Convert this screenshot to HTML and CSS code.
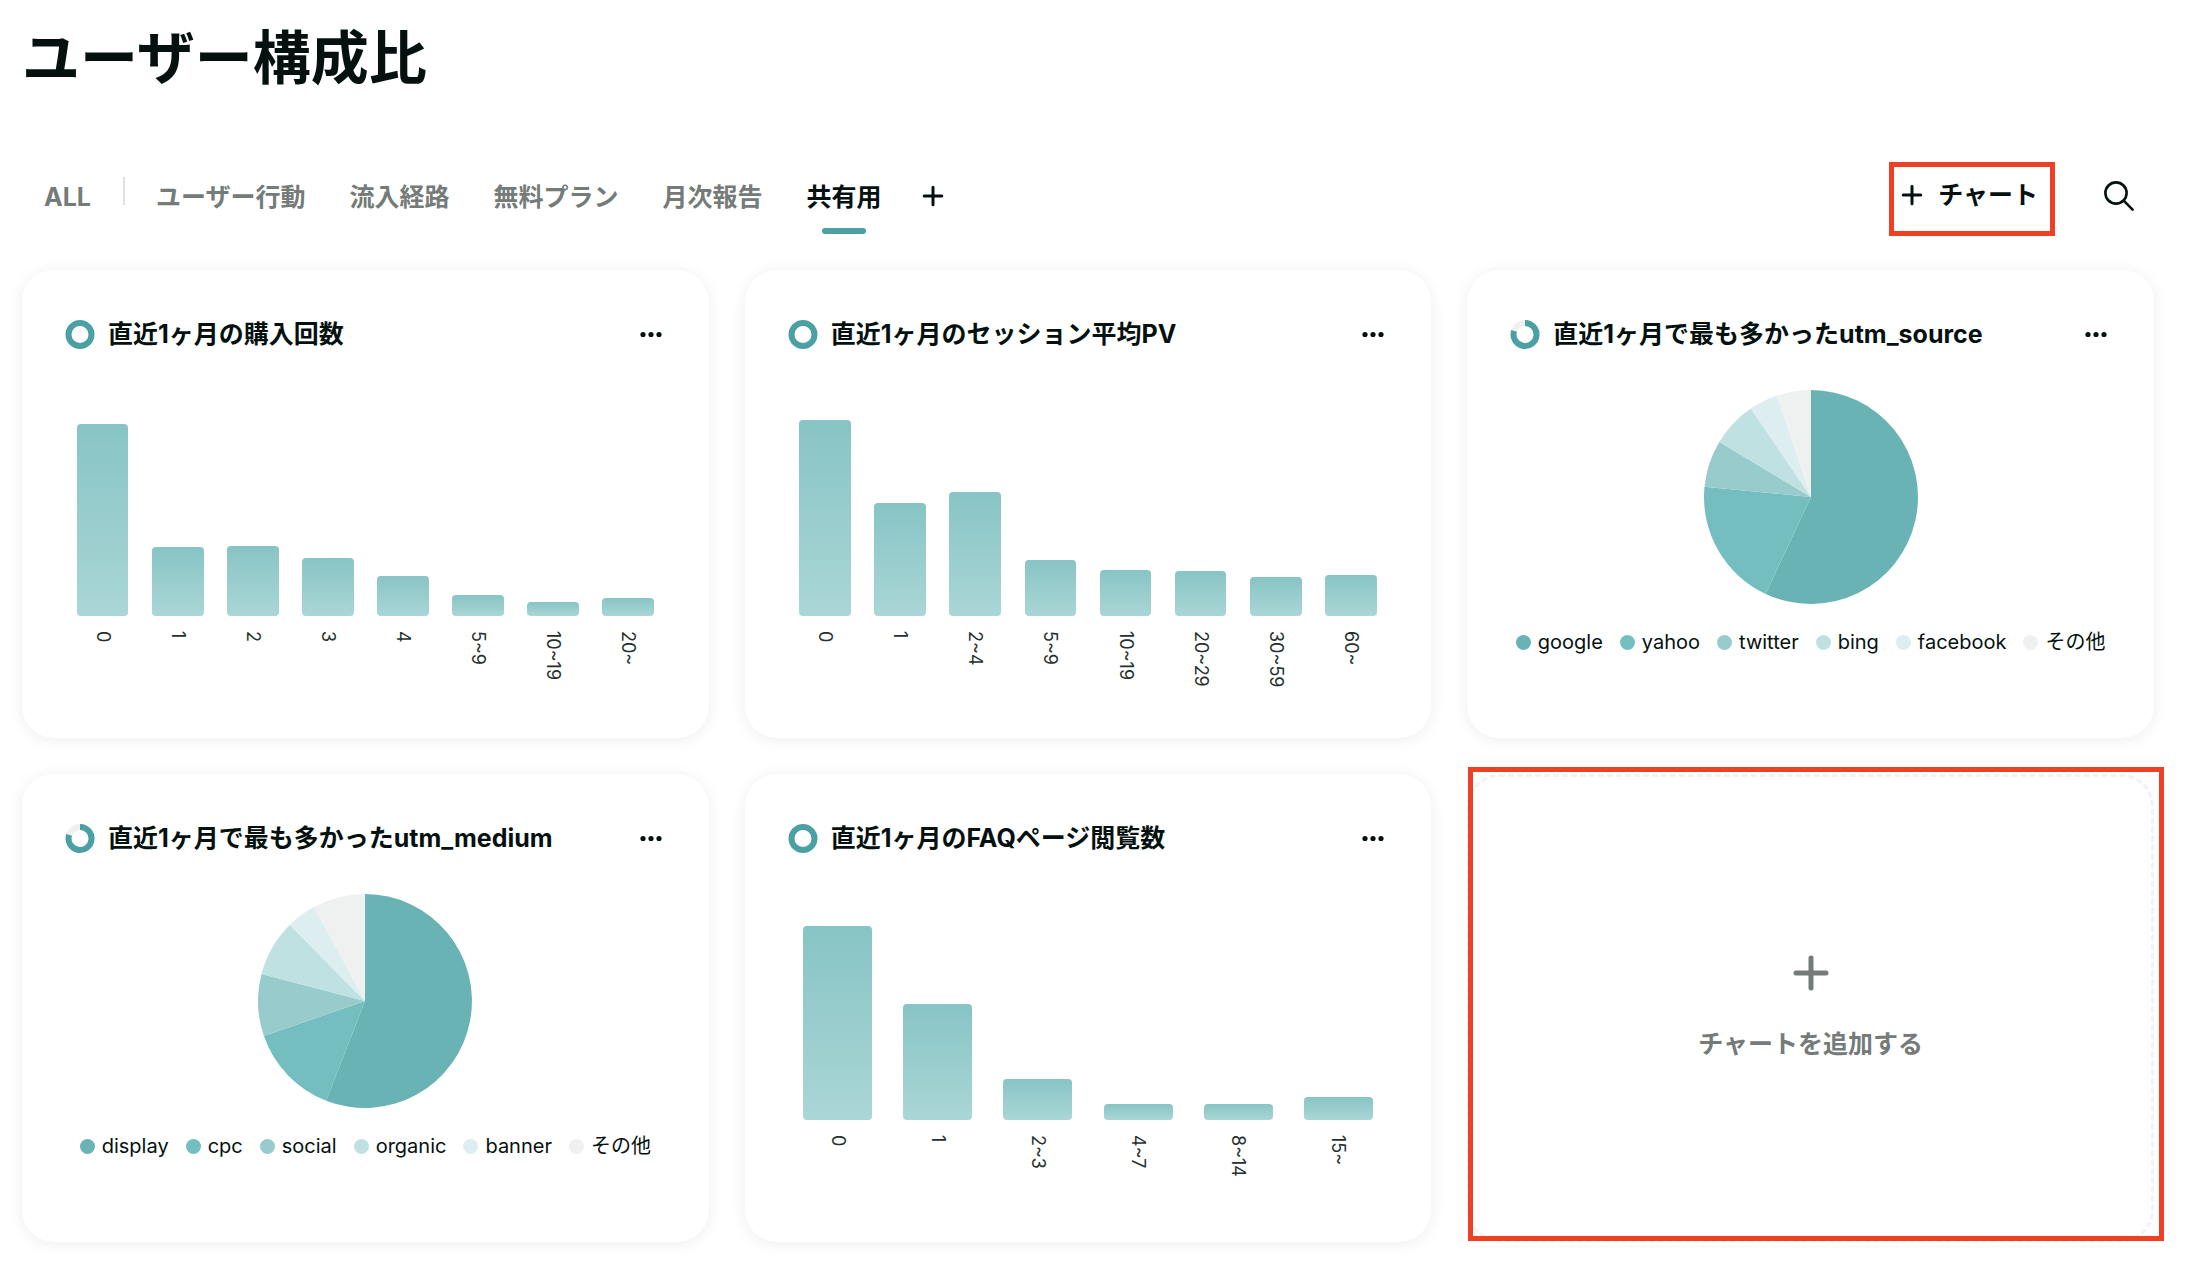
FILE: index.html
```html
<!DOCTYPE html>
<html lang="ja">
<head>
<meta charset="utf-8">
<meta name="viewport" content="width=device-width, initial-scale=1">
<title>ユーザー構成比</title>
<link rel="stylesheet" href="styles.css">
</head>
<body>
<svg class="defs" aria-hidden="true">
  <symbol id="icon-ring" viewBox="0 0 30 30">
    <circle cx="15" cy="14.5" r="11.5" fill="none" stroke="#4ba0a3" stroke-width="6"/>
  </symbol>
  <symbol id="icon-ring-part" viewBox="0 0 30 30">
    <circle cx="15" cy="14.5" r="11.5" fill="none" stroke="#eff1f0" stroke-width="6"/>
    <path d="M15 3A11.5 11.5 0 1 1 4.1 10.9" fill="none" stroke="#4ba0a3" stroke-width="6"/>
  </symbol>
  <symbol id="icon-more" viewBox="0 0 30 30">
    <circle cx="7" cy="14.5" r="2.6"/><circle cx="15" cy="14.5" r="2.6"/><circle cx="23" cy="14.5" r="2.6"/>
  </symbol>
  <symbol id="icon-plus" viewBox="0 0 22 22">
    <path d="M11 2.2V19.8M2.2 11H19.8" fill="none" stroke="currentColor" stroke-width="3" stroke-linecap="round"/>
  </symbol>
</svg>
<main class="page">
  <h1 class="page-title">ユーザー構成比</h1>
  <div class="toolbar">
    <nav class="tabs" aria-label="ボード">
      <button class="tab tab-all" type="button">ALL</button>
      <span class="divider"></span>
      <button class="tab" type="button">ユーザー行動</button>
      <button class="tab" type="button">流入経路</button>
      <button class="tab" type="button">無料プラン</button>
      <button class="tab" type="button">月次報告</button>
      <button class="tab tab-active" type="button" aria-current="page">共有用</button>
      <button class="tab-add" type="button" aria-label="タブを追加"><svg class="icon-plus"><use href="#icon-plus"/></svg></button>
    </nav>
    <div class="actions">
      <button class="add-button" type="button"><svg class="icon-plus"><use href="#icon-plus"/></svg>チャート</button>
      <button class="search" type="button" aria-label="検索">
        <svg class="icon-search" viewBox="0 0 32 32"><circle cx="13" cy="13" r="10.6"/><path d="M20.7 20.7L29.6 29.6"/></svg>
      </button>
    </div>
  </div>

  <div class="grid">
    <section class="card">
      <header class="card-head">
        <svg class="icon-ring"><use href="#icon-ring"/></svg>
        <h2 class="card-title">直近1ヶ月の購入回数</h2>
        <button class="more" type="button" aria-label="メニュー"><svg class="icon-more"><use href="#icon-more"/></svg></button>
      </header>
      <div class="bars">
        <div class="col"><div class="plot"><div class="bar" style="height:192px"></div></div><span class="tick">0</span></div>
        <div class="col"><div class="plot"><div class="bar" style="height:69px"></div></div><span class="tick">1</span></div>
        <div class="col"><div class="plot"><div class="bar" style="height:70px"></div></div><span class="tick">2</span></div>
        <div class="col"><div class="plot"><div class="bar" style="height:58px"></div></div><span class="tick">3</span></div>
        <div class="col"><div class="plot"><div class="bar" style="height:40px"></div></div><span class="tick">4</span></div>
        <div class="col"><div class="plot"><div class="bar" style="height:21px"></div></div><span class="tick">5~9</span></div>
        <div class="col"><div class="plot"><div class="bar" style="height:14px"></div></div><span class="tick">10~19</span></div>
        <div class="col"><div class="plot"><div class="bar" style="height:18px"></div></div><span class="tick">20~</span></div>
      </div>
    </section>

    <section class="card">
      <header class="card-head">
        <svg class="icon-ring"><use href="#icon-ring"/></svg>
        <h2 class="card-title">直近1ヶ月のセッション平均PV</h2>
        <button class="more" type="button" aria-label="メニュー"><svg class="icon-more"><use href="#icon-more"/></svg></button>
      </header>
      <div class="bars">
        <div class="col"><div class="plot"><div class="bar" style="height:196px"></div></div><span class="tick">0</span></div>
        <div class="col"><div class="plot"><div class="bar" style="height:113px"></div></div><span class="tick">1</span></div>
        <div class="col"><div class="plot"><div class="bar" style="height:124px"></div></div><span class="tick">2~4</span></div>
        <div class="col"><div class="plot"><div class="bar" style="height:56px"></div></div><span class="tick">5~9</span></div>
        <div class="col"><div class="plot"><div class="bar" style="height:46px"></div></div><span class="tick">10~19</span></div>
        <div class="col"><div class="plot"><div class="bar" style="height:45px"></div></div><span class="tick">20~29</span></div>
        <div class="col"><div class="plot"><div class="bar" style="height:39px"></div></div><span class="tick">30~59</span></div>
        <div class="col"><div class="plot"><div class="bar" style="height:41px"></div></div><span class="tick">60~</span></div>
      </div>
    </section>

    <section class="card">
      <header class="card-head">
        <svg class="icon-ring"><use href="#icon-ring-part"/></svg>
        <h2 class="card-title">直近1ヶ月で最も多かったutm_source</h2>
        <button class="more" type="button" aria-label="メニュー"><svg class="icon-more"><use href="#icon-more"/></svg></button>
      </header>
      <svg class="pie" viewBox="-107 -107 214 214" role="img" aria-label="utm_source">
        <path class="s1" d="M0 0V-107A107 107 0 1 1 -45.4 96.9Z"/>
        <path class="s2" d="M0 0L-45.4 96.9A107 107 0 0 1 -106.5 -10.3Z"/>
        <path class="s3" d="M0 0L-106.5 -10.3A107 107 0 0 1 -91.7 -55.1Z"/>
        <path class="s4" d="M0 0L-91.7 -55.1A107 107 0 0 1 -60.1 -88.5Z"/>
        <path class="s5" d="M0 0L-60.1 -88.5A107 107 0 0 1 -34 -101.5Z"/>
        <path class="s6" d="M0 0L-34 -101.5A107 107 0 0 1 0 -107Z"/>
      </svg>
      <ul class="legend">
        <li class="key k1">google</li>
        <li class="key k2">yahoo</li>
        <li class="key k3">twitter</li>
        <li class="key k4">bing</li>
        <li class="key k5">facebook</li>
        <li class="key k6">その他</li>
      </ul>
    </section>

    <section class="card">
      <header class="card-head">
        <svg class="icon-ring"><use href="#icon-ring-part"/></svg>
        <h2 class="card-title">直近1ヶ月で最も多かったutm_medium</h2>
        <button class="more" type="button" aria-label="メニュー"><svg class="icon-more"><use href="#icon-more"/></svg></button>
      </header>
      <svg class="pie" viewBox="-107 -107 214 214" role="img" aria-label="utm_medium">
        <path class="s1" d="M0 0V-107A107 107 0 1 1 -38.9 99.7Z"/>
        <path class="s2" d="M0 0L-38.9 99.7A107 107 0 0 1 -101.1 35Z"/>
        <path class="s3" d="M0 0L-101.1 35A107 107 0 0 1 -103.5 -27Z"/>
        <path class="s4" d="M0 0L-103.5 -27A107 107 0 0 1 -75.3 -76.1Z"/>
        <path class="s5" d="M0 0L-75.3 -76.1A107 107 0 0 1 -51.1 -94Z"/>
        <path class="s6" d="M0 0L-51.1 -94A107 107 0 0 1 0 -107Z"/>
      </svg>
      <ul class="legend">
        <li class="key k1">display</li>
        <li class="key k2">cpc</li>
        <li class="key k3">social</li>
        <li class="key k4">organic</li>
        <li class="key k5">banner</li>
        <li class="key k6">その他</li>
      </ul>
    </section>

    <section class="card">
      <header class="card-head">
        <svg class="icon-ring"><use href="#icon-ring"/></svg>
        <h2 class="card-title">直近1ヶ月のFAQページ閲覧数</h2>
        <button class="more" type="button" aria-label="メニュー"><svg class="icon-more"><use href="#icon-more"/></svg></button>
      </header>
      <div class="bars">
        <div class="col"><div class="plot"><div class="bar" style="height:194px"></div></div><span class="tick">0</span></div>
        <div class="col"><div class="plot"><div class="bar" style="height:116px"></div></div><span class="tick">1</span></div>
        <div class="col"><div class="plot"><div class="bar" style="height:41px"></div></div><span class="tick">2~3</span></div>
        <div class="col"><div class="plot"><div class="bar" style="height:16px"></div></div><span class="tick">4~7</span></div>
        <div class="col"><div class="plot"><div class="bar" style="height:16px"></div></div><span class="tick">8~14</span></div>
        <div class="col"><div class="plot"><div class="bar" style="height:23px"></div></div><span class="tick">15~</span></div>
      </div>
    </section>

    <button class="add-card" type="button">
      <svg class="icon-plus-large" viewBox="0 0 36 36"><path d="M18 3V33M3 18H33"/></svg>
      <span>チャートを追加する</span>
    </button>
  </div>
</main>
</body>
</html>
```

FILE: styles.css
```css
* { box-sizing: border-box; }

body {
  margin: 0;
  background: #fff;
  color: #04110f;
  font-family: Inter, "Noto Sans CJK JP", sans-serif;
}

button {
  margin: 0;
  padding: 0;
  border: 0;
  background: none;
  color: inherit;
  font: inherit;
  cursor: pointer;
}

svg { display: block; flex: none; }

.defs { position: absolute; width: 0; height: 0; }

.page { padding: 18px 52px 40px 22px; }

.page-title {
  margin: 0 0 64px;
  font-size: 58px;
  line-height: 80px;
  font-weight: 700;
}

/* Toolbar */
.toolbar {
  display: flex;
  justify-content: space-between;
  height: 74px;
  margin-bottom: 34px;
  font-size: 25px;
  line-height: 36px;
  font-weight: 700;
}

.tabs {
  display: flex;
  gap: 44px;
  padding-left: 22px;
}

.tab {
  position: relative;
  padding-bottom: 4px;
  color: #747b79;
  white-space: nowrap;
}

.tab-all { margin-right: -12px; }

.divider {
  width: 2px;
  height: 28px;
  margin: 15px -13px 0 0;
  background: #dfe1e1;
}

.tab-active { color: #04110f; }

.tab-active::after {
  content: "";
  position: absolute;
  left: 50%;
  bottom: 2px;
  width: 44px;
  height: 6px;
  margin-left: -22px;
  border-radius: 3px;
  background: #4ba0a3;
}

.tab-add { padding-bottom: 6px; margin-left: -4px; }

.icon-plus { width: 22px; height: 22px; }

.actions { display: flex; gap: 48px; margin-right: 19px; }

.add-button {
  display: flex;
  align-items: center;
  gap: 15px;
  padding: 0 12px 8px 7px;
  border: 5px solid #ee4025;
}

.search { padding-bottom: 6px; }

.icon-search {
  width: 32px;
  height: 32px;
  fill: none;
  stroke: #04110f;
  stroke-width: 2.6;
  stroke-linecap: round;
}

/* Cards */
.grid {
  display: grid;
  grid-template-columns: repeat(3, minmax(0, 1fr));
  gap: 36px;
}

.card {
  min-height: 468px;
  padding: 49px 43px 30px;
  border-radius: 32px;
  background: #fff;
  box-shadow: 0 2px 16px rgba(0, 0, 0, 0.07);
}

.card-head {
  display: flex;
  align-items: center;
  height: 31px;
}

.icon-ring { width: 30px; height: 30px; }

.card-title {
  flex: 1;
  margin: 0 0 0 13px;
  font-size: 25px;
  line-height: 29px;
  font-weight: 700;
  font-optical-sizing: none;
  white-space: nowrap;
}

.icon-more { width: 30px; height: 30px; fill: #04110f; }

/* Bar charts */
.bars { display: flex; }

.col {
  flex: 1;
  display: flex;
  flex-direction: column;
  align-items: center;
}

.plot {
  display: flex;
  align-items: flex-end;
  justify-content: center;
  width: 100%;
  height: 266px;
}

.bar {
  width: 69%;
  border-radius: 4px;
  background: linear-gradient(#88c4c5, #aad6d6);
}

.tick {
  margin-top: 15px;
  writing-mode: vertical-rl;
  text-orientation: sideways;
  font-size: 18px;
  line-height: 26px;
  font-optical-sizing: none;
  color: #26312f;
}

/* Pie charts */
.pie {
  width: 214px;
  height: 214px;
  margin: 40px auto 0;
}

.s1 { fill: #6ab3b5; }
.s2 { fill: #75bec0; }
.s3 { fill: #98cccc; }
.s4 { fill: #bfe1e1; }
.s5 { fill: #dceef0; }
.s6 { fill: #eff1f0; }

.legend {
  display: flex;
  justify-content: center;
  gap: 17px;
  margin: 23px 0 0;
  padding: 0;
  list-style: none;
}

.key {
  display: flex;
  align-items: center;
  gap: 7px;
  font-size: 20px;
  line-height: 30px;
  white-space: nowrap;
}

.key::before {
  content: "";
  width: 15px;
  height: 15px;
  border-radius: 50%;
}

.k1::before { background: #6ab3b5; }
.k2::before { background: #75bec0; }
.k3::before { background: #98cccc; }
.k4::before { background: #bfe1e1; }
.k5::before { background: #dceef0; }
.k6::before { background: #eff1f0; }

/* Empty slot */
.add-card {
  position: relative;
  display: flex;
  flex-direction: column;
  align-items: center;
  justify-content: center;
  gap: 35px;
  min-height: 468px;
  border: 3px dashed #f1f2f2;
  border-radius: 32px;
  color: #747b79;
  font-size: 25px;
  line-height: 36px;
  font-weight: 700;
}

.add-card::after {
  content: "";
  position: absolute;
  inset: -10px -13px -2px -2px;
  border: 5px solid #ee4025;
}

.icon-plus-large {
  width: 36px;
  height: 36px;
  fill: none;
  stroke: #747b79;
  stroke-width: 5;
  stroke-linecap: round;
}
```
